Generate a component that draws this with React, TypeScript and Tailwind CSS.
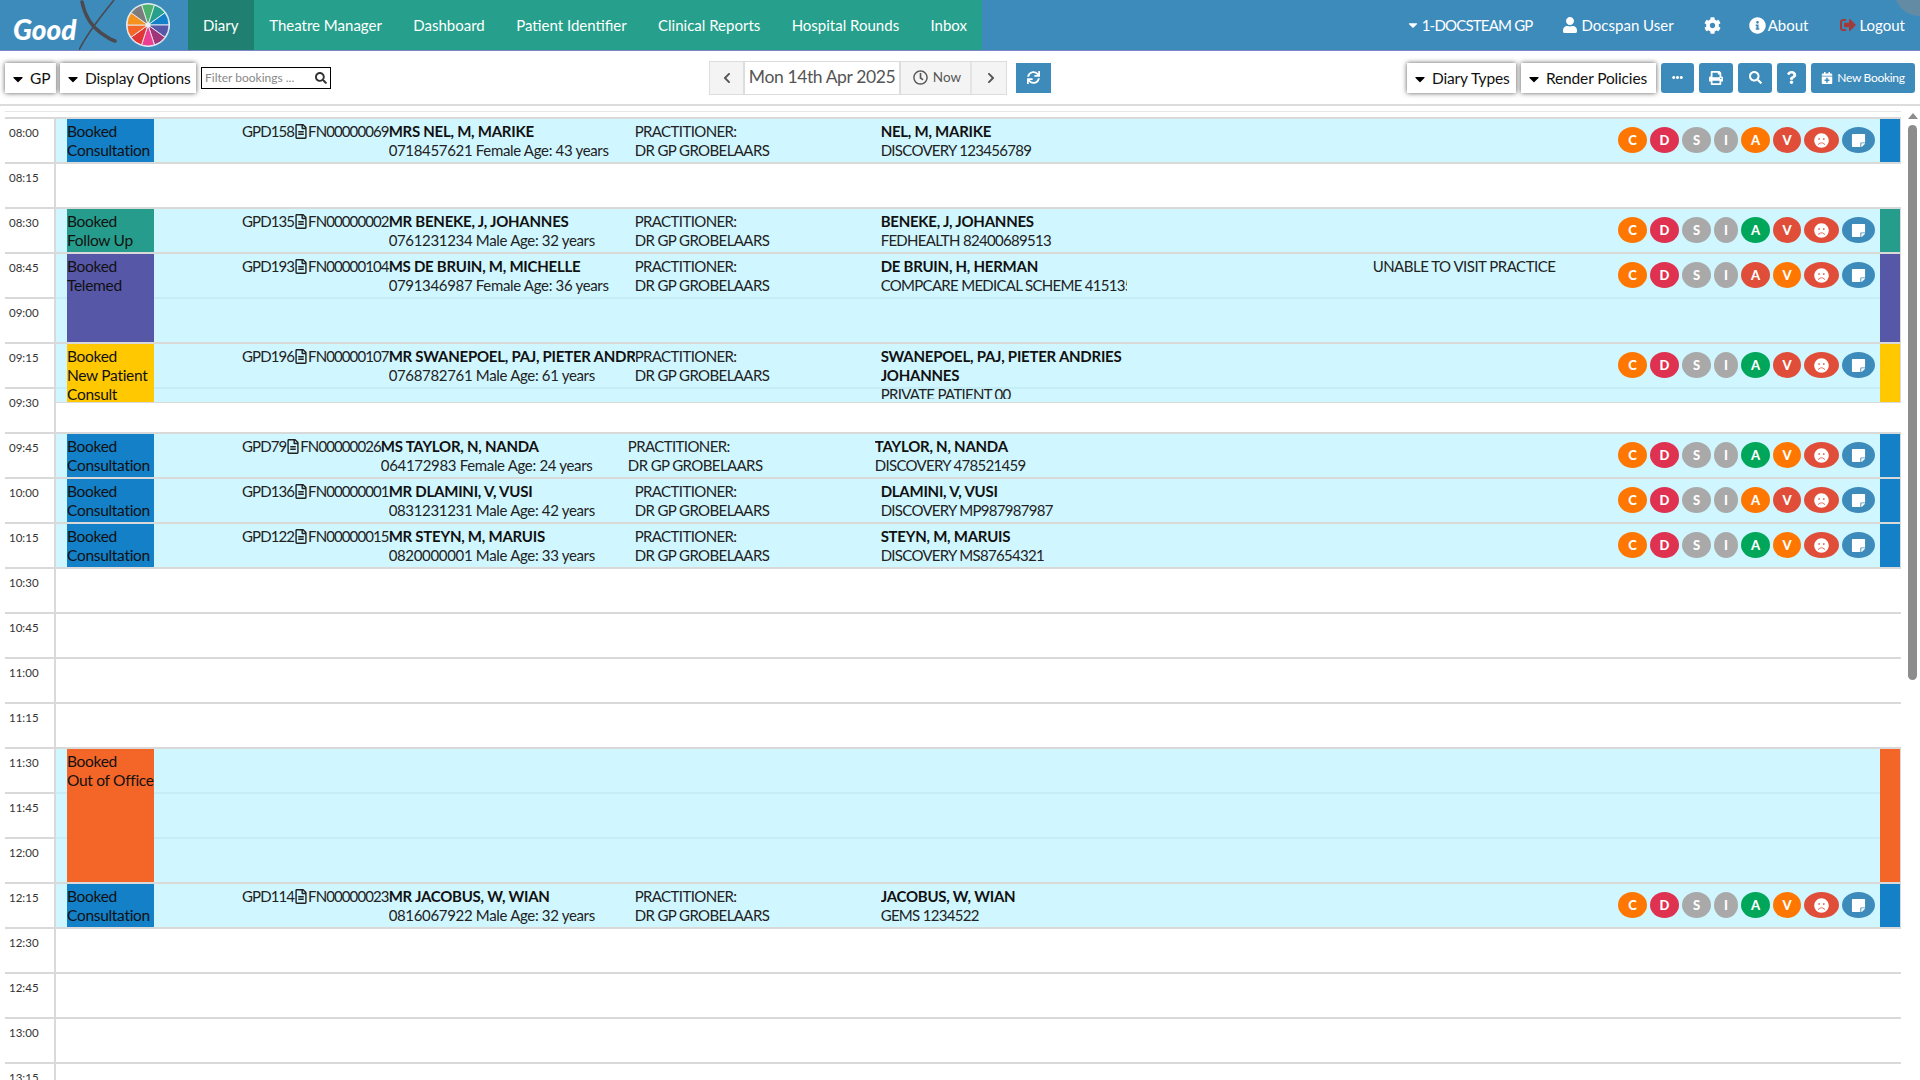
import { FaCalendarPlus, FaCaretDown, FaChevronLeft, FaChevronRight, FaCog, FaEllipsisH, FaFrown, FaInfoCircle, FaPrint, FaQuestion, FaRegClock, FaRegFileAlt, FaSearch, FaSignOutAlt, FaStickyNote, FaSync, FaUser } from "react-icons/fa";

type Booking = {
  type: string[];
  color: string;
  gpd: string;
  fn: string;
  name: string;
  details: string;
  member: string;
  scheme: string;
  note?: string;
  a: string;
  v: string;
  shifted?: boolean;
};

type Group = {
  times: string[];
  booking?: Booking;
  block?: { type: string[]; color: string };
  height?: string;
};

const orange = "bg-[#ff7700]";
const red = "bg-[#e04e39]";
const green = "bg-[#00a65a]";

const groups: Group[] = [
  {
    times: ["08:00"],
    booking: { type: ["Booked", "Consultation"], color: "bg-[#1380c8]", gpd: "GPD158", fn: "FN00000069", name: "MRS NEL, M, MARIKE", details: "0718457621 Female Age: 43 years", member: "NEL, M, MARIKE", scheme: "DISCOVERY 123456789", a: orange, v: red },
  },
  { times: ["08:15"] },
  {
    times: ["08:30"],
    booking: { type: ["Booked", "Follow Up"], color: "bg-[#269d8c]", gpd: "GPD135", fn: "FN00000002", name: "MR BENEKE, J, JOHANNES", details: "0761231234 Male Age: 32 years", member: "BENEKE, J, JOHANNES", scheme: "FEDHEALTH 82400689513", a: green, v: red },
  },
  {
    times: ["08:45", "09:00"],
    booking: { type: ["Booked", "Telemed"], color: "bg-[#5757a8]", gpd: "GPD193", fn: "FN00000104", name: "MS DE BRUIN, M, MICHELLE", details: "0791346987 Female Age: 36 years", member: "DE BRUIN, H, HERMAN", scheme: "COMPCARE MEDICAL SCHEME 415135", note: "UNABLE TO VISIT PRACTICE", a: red, v: orange },
  },
  {
    times: ["09:15", "09:30"],
    height: "h-[59px]",
    booking: { type: ["Booked", "New Patient", "Consult"], color: "bg-[#ffc800]", gpd: "GPD196", fn: "FN00000107", name: "MR SWANEPOEL, PAJ, PIETER ANDRIES JOHANNES", details: "0768782761 Male Age: 61 years", member: "SWANEPOEL, PAJ, PIETER ANDRIES JOHANNES", scheme: "PRIVATE PATIENT 00", a: green, v: red },
  },
  {
    times: ["09:45"],
    booking: { type: ["Booked", "Consultation"], color: "bg-[#1380c8]", gpd: "GPD79", fn: "FN00000026", name: "MS TAYLOR, N, NANDA", details: "064172983 Female Age: 24 years", member: "TAYLOR, N, NANDA", scheme: "DISCOVERY 478521459", a: green, v: orange, shifted: true },
  },
  {
    times: ["10:00"],
    booking: { type: ["Booked", "Consultation"], color: "bg-[#1380c8]", gpd: "GPD136", fn: "FN00000001", name: "MR DLAMINI, V, VUSI", details: "0831231231 Male Age: 42 years", member: "DLAMINI, V, VUSI", scheme: "DISCOVERY MP987987987", a: orange, v: red },
  },
  {
    times: ["10:15"],
    booking: { type: ["Booked", "Consultation"], color: "bg-[#1380c8]", gpd: "GPD122", fn: "FN00000015", name: "MR STEYN, M, MARUIS", details: "0820000001 Male Age: 33 years", member: "STEYN, M, MARUIS", scheme: "DISCOVERY MS87654321", a: green, v: orange },
  },
  { times: ["10:30"] },
  { times: ["10:45"] },
  { times: ["11:00"] },
  { times: ["11:15"] },
  {
    times: ["11:30", "11:45", "12:00"],
    block: { type: ["Booked", "Out of Office"], color: "bg-[#f46528]" },
  },
  {
    times: ["12:15"],
    booking: { type: ["Booked", "Consultation"], color: "bg-[#1380c8]", gpd: "GPD114", fn: "FN00000023", name: "MR JACOBUS, W, WIAN", details: "0816067922 Male Age: 32 years", member: "JACOBUS, W, WIAN", scheme: "GEMS 1234522", a: green, v: orange },
  },
  { times: ["12:30"] },
  { times: ["12:45"] },
  { times: ["13:00"] },
  { times: ["13:15"] },
];

const wheelColors = ["#4cb36e", "#26a08c", "#1380c8", "#5757a8", "#a0357a", "#ec3f94", "#e23535", "#f46528", "#f5921e", "#7c7c7c"];

function wedge(i: number) {
  const start = ((i * 36 - 108) * Math.PI) / 180;
  const end = (((i + 1) * 36 - 108) * Math.PI) / 180;
  const r = 21;
  const p = (a: number) => `${(23 + r * Math.cos(a)).toFixed(2)} ${(23 + r * Math.sin(a)).toFixed(2)}`;
  return `M23 23L${p(start)}A${r} ${r} 0 0 1 ${p(end)}Z`;
}

function Logo() {
  return (
    <div className="flex h-full w-[188px] shrink-0 items-center pl-[13px]">
      <span className="w-[66px] shrink-0 whitespace-nowrap pt-[8px] text-[28px] font-black italic text-white">Good</span>
      <svg viewBox="0 0 42 50" className="h-[50px] w-[42px] shrink-0">
        <path d="M3 2C6 16 12 26 22 33C28 37 32 40 36 41" stroke="#4a4a50" strokeWidth="3.5" fill="none" strokeLinecap="round" />
        <path d="M35 0C24 14 10 30 0 50" stroke="#4a4a50" strokeWidth="1.6" fill="none" />
      </svg>
      <svg viewBox="0 0 46 46" className="ml-[4px] h-[46px] w-[46px] shrink-0">
        <circle cx="23" cy="23" r="22" fill="#fff" opacity="0.85" />
        {wheelColors.map((c, i) => (
          <path key={c} d={wedge(i)} fill={c} stroke="#e8eef2" strokeWidth="0.9" />
        ))}
        <circle cx="23" cy="23" r="2.5" fill="#e8eef2" />
      </svg>
    </div>
  );
}

function ShadowButton({ label, className }: { label: string; className: string }) {
  return (
    <button className={`flex h-[30px] items-center gap-[4px] whitespace-nowrap bg-white pt-[2px] pl-[5px] text-[15.5px] tracking-[-0.15px] text-[#111] shadow-[0_0_5px_rgba(0,0,0,0.65)] ${className}`}>
      <FaCaretDown className="text-[16px] text-black" />
      {label}
    </button>
  );
}

function BlueButton({ children, className }: { children: React.ReactNode; className: string }) {
  return <button className={`flex h-[30px] items-center justify-center whitespace-nowrap rounded-[3px] bg-[#3d8bbb] text-white ${className}`}>{children}</button>;
}

function Pill({ color, className, children }: { color: string; className: string; children: React.ReactNode }) {
  return <span className={`flex h-[26px] items-center justify-center rounded-[50%] text-[13px] font-black tracking-normal text-white ${color} ${className}`}>{children}</span>;
}

function Actions({ a, v }: { a: string; v: string }) {
  return (
    <div className="mr-[5px] ml-auto flex shrink-0 gap-[3px] pt-[5px]">
      <Pill color={orange} className="w-[29px]">C</Pill>
      <Pill color="bg-[#df3150]" className="w-[29px]">D</Pill>
      <Pill color="bg-[#a9a9a9]" className="w-[29px]">S</Pill>
      <Pill color="bg-[#a9a9a9]" className="w-[24px]">I</Pill>
      <Pill color={a} className="w-[29px]">A</Pill>
      <Pill color={v} className="w-[28px]">V</Pill>
      <Pill color={red} className="w-[35px]"><FaFrown className="text-[15px]" /></Pill>
      <Pill color="bg-[#3d8bbb]" className="w-[33px]"><FaStickyNote className="text-[15px]" /></Pill>
    </div>
  );
}

function BookingRow({ booking }: { booking: Booking }) {
  const colWidth = booking.shifted ? "w-[247px]" : "w-[246px]";
  return (
    <div className="relative flex min-w-0 flex-1 pt-[3px] text-[15px] leading-[19px] text-[#222]">
      <div className="flex shrink-0 items-start whitespace-nowrap tracking-[-0.9px]">
        <span>{booking.gpd}</span>
        <FaRegFileAlt className="mx-[1px] mt-[2px] h-[15px] w-[12px] text-[#222]" />
        <span>{booking.fn}</span>
      </div>
      <div className={`${colWidth} shrink-0 overflow-hidden whitespace-nowrap`}>
        <div className="font-bold tracking-[-0.25px] text-[#111]">{booking.name}</div>
        <div className="tracking-[-0.33px]">{booking.details}</div>
      </div>
      <div className={`${colWidth} shrink-0 tracking-[-0.6px]`}>
        <div>PRACTITIONER:</div>
        <div>DR GP GROBELAARS</div>
      </div>
      <div className="max-h-[52px] w-[246px] shrink-0 overflow-hidden">
        <div className="font-bold tracking-[-0.25px] text-[#111]">{booking.member}</div>
        <div className="whitespace-nowrap tracking-[-0.7px]">{booking.scheme}</div>
      </div>
      {booking.note && <div className="ml-[246px] w-[0px] whitespace-nowrap tracking-[-0.5px]">{booking.note}</div>}
      <Actions a={booking.a} v={booking.v} />
    </div>
  );
}

function SlotGroup({ group }: { group: Group }) {
  const filled = group.booking ?? group.block;
  const color = group.booking?.color ?? group.block?.color;
  const type = group.booking?.type ?? group.block?.type;
  return (
    <div className="flex">
      <div className="w-[51px] shrink-0 border-r-2 border-[#d9d9d9]">
        {group.times.map((t) => (
          <div key={t} className="h-[45px] border-t-2 border-[#d9d9d9] pt-[4px] pl-[4px] text-[11.5px] leading-[19px] text-[#333]">
            {t}
          </div>
        ))}
      </div>
      <div className="min-w-0 flex-1 border-t-2 border-[#d9d9d9]">
        {filled && (
          <div className={`relative flex overflow-hidden border-r border-[#d9d9d9] bg-[#d0f6ff] ${group.height ? `${group.height} border-b` : ""}`}
            style={group.height ? undefined : { height: group.times.length * 45 - 2 }}>
            {group.times.slice(1).map((t, i) => (
              <div key={t} className="absolute right-0 left-0 h-[2px] bg-[#c5edf5]" style={{ top: (i + 1) * 45 - 2 }} />
            ))}
            <div className={`relative ml-[11px] w-[87px] shrink-0 pt-[3px] text-[15.5px] leading-[19px] tracking-[-0.3px] text-[#111] ${color}`}>
              {type?.map((line) => <div key={line} className="whitespace-nowrap">{line}</div>)}
            </div>
            <div className="w-[88px] shrink-0" />
            {group.booking ? <BookingRow booking={group.booking} /> : <div className="flex-1" />}
            <div className={`relative w-[20px] shrink-0 ${color}`} />
          </div>
        )}
      </div>
    </div>
  );
}

export default function App() {
  return (
    <div className="flex h-screen flex-col overflow-hidden bg-white font-['Lato',sans-serif] text-[#333]">
      <header className="flex h-[51px] shrink-0 items-stretch border-b border-[#7a86c6] bg-[#3d8bbb] text-[15px] text-white">
        <Logo />
        <nav className="flex w-[794px] shrink-0 bg-[#26a08c]">
          {["Diary", "Theatre Manager", "Dashboard", "Patient Identifier", "Clinical Reports", "Hospital Rounds", "Inbox"].map((item, i) => (
            <a key={item} className={`flex shrink-0 items-center whitespace-nowrap ${i === 0 ? "bg-[#1f7f70] px-[15px]" : "px-[15.7px]"}`}>{item}</a>
          ))}
        </nav>
        <div className="relative flex flex-1 items-center justify-end overflow-hidden pr-[15px]">
          <span className="flex items-center gap-[2px]"><FaCaretDown className="text-[14px]" /><span className="tracking-[-0.8px]">1-DOCSTEAM GP</span></span>
          <span className="ml-[29px] flex items-center gap-[4px]"><FaUser className="text-[16px]" />Docspan User</span>
          <FaCog className="ml-[30px] text-[17px]" />
          <span className="ml-[28px] flex items-center gap-[2px]"><FaInfoCircle className="text-[17px]" />About</span>
          <span className="ml-[32px] flex items-center gap-[3px]"><FaSignOutAlt className="text-[16px] text-[#a33a3a]" />Logout</span>
          <div className="absolute top-[-36px] right-[-26px] h-[52px] w-[52px] rounded-full bg-[#7f8c94]/60" />
        </div>
      </header>
      <div className="flex h-[55px] shrink-0 items-center border-b-2 border-[#dcdcdc]">
        <div className="flex w-[709px] shrink-0 items-center pl-[5px]">
          <ShadowButton label="GP" className="w-[51px]" />
          <ShadowButton label="Display Options" className="ml-[4px] w-[136px]" />
          <div className="ml-[5px] flex h-[22px] w-[130px] items-center justify-between border border-black px-[3px] text-[12px] text-[#888]">
            Filter bookings ...
            <FaSearch className="text-[12px] text-[#333]" />
          </div>
        </div>
        <div className="flex h-[34px] w-[298px] shrink-0 border border-[#ddd] bg-[#f4f4f4] text-[#555]">
          <button className="flex w-[33px] items-center justify-center"><FaChevronLeft className="text-[12px]" /></button>
          <div className="flex w-[158px] items-center justify-center whitespace-nowrap border-x-2 border-[#ddd] bg-white text-[17.5px] tracking-[-0.4px] text-[#555]">Mon 14th Apr 2025</div>
          <button className="flex w-[71px] items-center justify-center gap-[5px] border-r-2 border-[#e4e4e4] pl-[3px] text-[13.5px]"><FaRegClock className="text-[15px]" />Now</button>
          <button className="flex flex-1 items-center justify-center pl-[3px]"><FaChevronRight className="text-[12px]" /></button>
        </div>
        <BlueButton className="ml-[9px] w-[35px] rounded-none"><FaSync className="text-[13px]" /></BlueButton>
        <div className="mr-[5px] ml-auto flex items-center">
          <ShadowButton label="Diary Types" className="w-[109px]" />
          <ShadowButton label="Render Policies" className="ml-[5px] w-[135px]" />
          <BlueButton className="ml-[5px] w-[33px]"><FaEllipsisH className="text-[11px]" /></BlueButton>
          <BlueButton className="ml-[5px] w-[34px]"><FaPrint className="text-[14px]" /></BlueButton>
          <BlueButton className="ml-[5px] w-[34px]"><FaSearch className="text-[13px]" /></BlueButton>
          <BlueButton className="ml-[5px] w-[29px]"><FaQuestion className="text-[13px]" /></BlueButton>
          <BlueButton className="ml-[5px] w-[104px] gap-[4px] text-[12px] tracking-[-0.3px]"><FaCalendarPlus className="text-[12px]" />New Booking</BlueButton>
        </div>
      </div>
      <div className="flex min-h-0 flex-1">
        <div className="ml-[5px] w-[1896px] shrink-0">
          <div className="mt-[5px] mb-[5px] h-[1px] bg-[#e6e6e6]" />
          {groups.map((g) => <SlotGroup key={g.times[0]} group={g} />)}
        </div>
        <div className="ml-[7px] flex w-[9px] shrink-0 flex-col items-center pt-[7px]">
          <div className="h-0 w-0 border-x-[5px] border-b-[6px] border-x-transparent border-b-[#8c8c8c]" />
          <div className="mt-[6px] h-[555px] w-[9px] rounded-full bg-[#8c8c8c]" />
        </div>
      </div>
    </div>
  );
}
